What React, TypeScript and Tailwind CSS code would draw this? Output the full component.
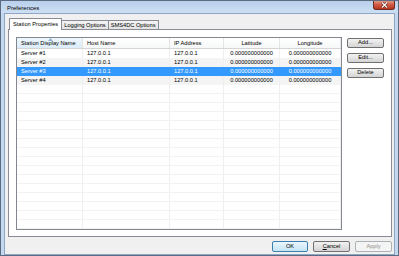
const columns = [
  { title: "Station Display Name", align: "left" },
  { title: "Host Name", align: "left" },
  { title: "IP Address", align: "left" },
  { title: "Latitude", align: "center" },
  { title: "Longitude", align: "center" },
];

const servers = [
  ["Server #1", "127.0.0.1", "127.0.0.1", "0.000000000000", "0.000000000000"],
  ["Server #2", "127.0.0.1", "127.0.0.1", "0.000000000000", "0.000000000000"],
  ["Server #3", "127.0.0.1", "127.0.0.1", "0.000000000000", "0.000000000000"],
  ["Server #4", "127.0.0.1", "127.0.0.1", "0.000000000000", "0.000000000000"],
];

const gridCols = "grid grid-cols-[66px_87px_54px_56px_61px]";

const WinButton = ({ label, underline }: { label: string; underline?: boolean }) => (
  <button className="w-[37px] h-[10px] rounded-[2px] border border-[#707070] bg-gradient-to-b from-[#f2f2f2] to-[#d4d4d4] flex items-center justify-center leading-none">
    {underline ? (
      <span>
        <span className="underline">{label[0]}</span>
        {label.slice(1)}
      </span>
    ) : (
      label
    )}
  </button>
);

const App = () => {
  const emptyRows = Array.from({ length: 16 });
  return (
    <div className="w-[399px] h-[256px] bg-[#c3d7ee] border border-[#5b6c82] flex flex-col font-['Liberation_Sans',sans-serif] text-[5.7px] text-black overflow-hidden">
      {/* title bar */}
      <div className="h-[12px] flex items-start justify-between pl-[6px] pr-[3px] bg-gradient-to-b from-[#b9d0eb] to-[#cddff3]">
        <span className="text-[6px] mt-[3px]">Preferences</span>
        <div className="w-[22px] h-[10px] -mt-[1px] rounded-b-[3px] border border-t-0 border-[#6e2a20] bg-gradient-to-b from-[#e6a596] via-[#cf5b45] to-[#b9341f] flex items-center justify-center">
          <svg width="7" height="6" viewBox="0 0 7 6">
            <path d="M1 0.5 L6 5.5 M6 0.5 L1 5.5" stroke="#4a1a12" strokeWidth="2.2" />
            <path d="M1 0.5 L6 5.5 M6 0.5 L1 5.5" stroke="#ffffff" strokeWidth="1.2" />
          </svg>
        </div>
      </div>

      {/* client area */}
      <div className="flex-1 mx-[3px] mb-[4px] bg-[#f0f0f0] border border-[#8ea6c3] flex flex-col">
        {/* tabs */}
        <div className="flex items-end mt-[4px] ml-[4px] h-[12px] relative z-10">
          <div className="h-[12px] px-[3px] bg-white border border-b-0 border-[#898c95] rounded-t-[1px] flex items-center">
            Station Properties
          </div>
          <div className="h-[10px] px-[2px] bg-gradient-to-b from-[#f4f4f4] to-[#e3e3e3] border border-l-0 border-[#898c95] flex items-center">
            Logging Options
          </div>
          <div className="h-[10px] px-[2px] bg-gradient-to-b from-[#f4f4f4] to-[#e3e3e3] border border-l-0 border-[#898c95] flex items-center">
            SMS4DC Options
          </div>
        </div>

        {/* tab panel */}
        <div className="flex-1 -mt-[1px] ml-[3px] mr-[2px] bg-white border border-[#898c95] flex pt-[7px] pb-[6px] pl-[7px] pr-[7px]">
          {/* list view */}
          <div className="w-[327px] border border-[#828790] bg-white flex flex-col overflow-hidden">
            <div className={`${gridCols} h-[11px] border-b border-[#d5d5d5] shrink-0`}>
              {columns.map((c, i) => (
                <div
                  key={c.title}
                  className={`relative flex items-center border-r border-[#e5e5e5] ${
                    c.align === "center" ? "justify-center" : "pl-[4px]"
                  } ${i === 0 ? "bg-gradient-to-b from-[#eef6fc] to-[#dcecf8]" : "bg-gradient-to-b from-white to-[#f6f7f8]"}`}
                >
                  {i === 0 && (
                    <svg className="absolute left-[31px] top-0" width="5" height="3" viewBox="0 0 5 3">
                      <path d="M0 3 L2.5 0 L5 3 Z" fill="#8fb3d6" />
                    </svg>
                  )}
                  {c.title}
                </div>
              ))}
            </div>
            {servers.map((row, r) => (
              <div
                key={row[0]}
                className={`${gridCols} h-[9px] shrink-0 ${
                  r === 2 ? "bg-[#3399ff] text-white" : r % 2 === 1 ? "bg-[#f4f4f4]" : "bg-white"
                }`}
              >
                {row.map((cell, i) => (
                  <div
                    key={i}
                    className={`flex items-center border-r ${r === 2 ? "border-[#3399ff]" : "border-[#efefef]"} ${
                      columns[i].align === "center" ? "justify-center" : "pl-[4px]"
                    }`}
                  >
                    {cell}
                  </div>
                ))}
              </div>
            ))}
            {emptyRows.map((_, r) => (
              <div key={r} className={`${gridCols} h-[9px] shrink-0 border-b border-[#f2f2f2]`}>
                {columns.map((c) => (
                  <div key={c.title} className="border-r border-[#efefef]" />
                ))}
              </div>
            ))}
          </div>

          {/* side buttons */}
          <div className="ml-[5px] flex flex-col gap-[5px] pt-[1px]">
            <WinButton label="Add..." />
            <WinButton label="Edit..." />
            <WinButton label="Delete" />
          </div>
        </div>

        {/* dialog buttons */}
        <div className="flex justify-end gap-[5px] mt-[4px] mb-[2px] mr-[2px] h-[11px]">
          <button className="w-[36px] h-[11px] rounded-[2px] border border-[#3c7fb1] bg-gradient-to-b from-[#eaf6fd] to-[#c4e5f6] flex items-center justify-center leading-none">
            OK
          </button>
          <button className="w-[37px] h-[11px] rounded-[2px] border border-[#707070] bg-gradient-to-b from-[#f2f2f2] to-[#d4d4d4] flex items-center justify-center leading-none">
            <span>
              <span className="underline">C</span>ancel
            </span>
          </button>
          <button className="w-[37px] h-[11px] rounded-[2px] border border-[#adb2b5] bg-[#f4f4f4] text-[#8d8d8d] flex items-center justify-center leading-none">
            Apply
          </button>
        </div>
      </div>
    </div>
  );
};

export default App;
